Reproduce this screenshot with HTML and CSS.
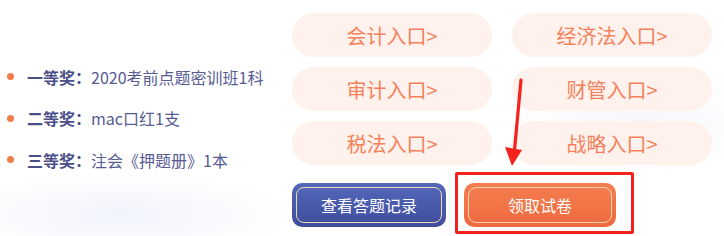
FILE: index.html
```html
<!DOCTYPE html>
<html lang="zh-CN">
<head>
<meta charset="utf-8">
<link rel="stylesheet" href="styles.css">
</head>
<body>
<div class="page">
  <ul class="prizes">
    <li><b>一等奖：</b>2020考前点题密训班1科</li>
    <li><b>二等奖：</b>mac口红1支</li>
    <li><b>三等奖：</b>注会《押题册》1本</li>
  </ul>
  <div class="panel">
    <div class="entries">
      <a class="entry">会计入口&gt;</a>
      <a class="entry">经济法入口&gt;</a>
      <a class="entry">审计入口&gt;</a>
      <a class="entry">财管入口&gt;</a>
      <a class="entry">税法入口&gt;</a>
      <a class="entry">战略入口&gt;</a>
    </div>
    <div class="actions">
      <a class="btn btn-blue"><span>查看答题记录</span></a>
      <a class="btn btn-orange"><span>领取试卷</span></a>
    </div>
  </div>
  <div class="mark-box"></div>
  <svg class="mark-arrow" width="724" height="236" viewBox="0 0 724 236">
    <line x1="521" y1="80" x2="514.5" y2="150" stroke="#f5211c" stroke-width="3.2" stroke-linecap="round"/>
    <polygon points="505,147 522,150 512,166" fill="#f5211c"/>
  </svg>
</div>
</body>
</html>
```
FILE: styles.css
```css
html, body {
  margin: 0;
  padding: 0;
  background: #ffffff;
}
body {
  width: 724px;
  height: 236px;
  overflow: hidden;
  font-family: "Noto Sans CJK SC", "Noto Sans", sans-serif;
}
.page {
  position: relative;
  width: 724px;
  height: 236px;
  display: flex;
  background:
    radial-gradient(ellipse 260px 60px at 120px 215px, rgba(230,234,248,0.55), rgba(255,255,255,0) 70%),
    radial-gradient(ellipse 200px 80px at 640px 120px, rgba(236,239,250,0.5), rgba(255,255,255,0) 70%),
    #fff;
}
.prizes {
  list-style: none;
  margin: 56px 0 0 0;
  padding: 0 0 0 7px;
  width: 292px;
  flex: none;
  box-sizing: border-box;
}
.prizes li {
  display: flex;
  align-items: center;
  height: 41.5px;
  font-size: 16px;
  color: #575b94;
  white-space: nowrap;
}
.prizes li::before {
  content: "";
  width: 7px;
  height: 7px;
  border-radius: 50%;
  background: #f27b47;
  margin-right: 13px;
  flex: none;
}
.prizes b {
  font-weight: 700;
  color: #4b4f88;
}
.panel {
  padding-top: 13px;
}
.entries {
  display: grid;
  grid-template-columns: 200px 200px;
  grid-auto-rows: 44px;
  column-gap: 20px;
  row-gap: 10px;
}
.entry {
  display: flex;
  align-items: center;
  justify-content: center;
  border-radius: 22px;
  background: #fff1ec;
  color: #f5815c;
  font-size: 20px;
}
.actions {
  display: flex;
  gap: 18px;
  margin-top: 18px;
}
.btn {
  display: flex;
  height: 44px;
  padding: 4px;
  box-sizing: border-box;
  border-radius: 10px;
  color: #ffffff;
  font-size: 16px;
}
.btn span {
  flex: 1;
  display: flex;
  align-items: center;
  justify-content: center;
  border-radius: 8px;
}
.btn-blue {
  width: 154px;
  background: linear-gradient(#5468b9, #3e4c9d);
}
.btn-blue span {
  border: 1.5px solid #efd9b8;
}
.btn-orange {
  width: 152px;
  background: linear-gradient(#f47e4f, #ee6a3f);
}
.btn-orange span {
  border: 1.5px solid #ffd2b4;
}
.mark-box {
  position: absolute;
  left: 455px;
  top: 172px;
  width: 179px;
  height: 62px;
  box-sizing: border-box;
  border: 3px solid #f5211c;
  border-radius: 2px;
}
.mark-arrow {
  position: absolute;
  left: 0;
  top: 0;
}
```
